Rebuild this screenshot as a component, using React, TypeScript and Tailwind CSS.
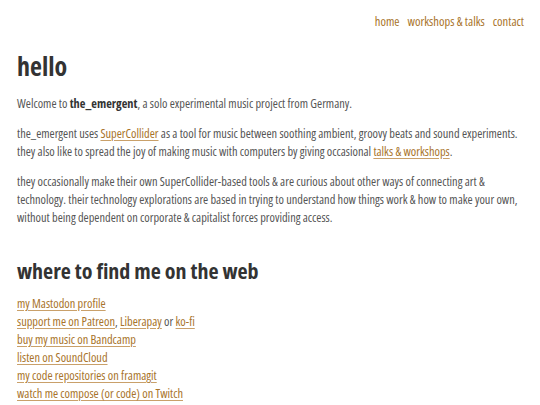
const link = "text-[#a8732a] underline decoration-[#c9a06a] underline-offset-2";

export default function App() {
  return (
    <div className="min-h-screen bg-white font-['Open_Sans',sans-serif] [font-stretch:condensed] text-[12.35px] leading-[18px] text-[#555]">
      <nav className="flex justify-end gap-2 px-4 pt-[13px] text-[12.5px]">
        <a className="text-[#a8732a]">home</a>
        <a className="text-[#a8732a]">workshops &amp; talks</a>
        <a className="text-[#a8732a]">contact</a>
      </nav>
      <main className="pl-[17px] pr-[8px]">
        <h1 className="mt-[19px] text-[26px] font-bold leading-[32px] text-[#333]">hello</h1>
        <p className="mt-[13px]">
          Welcome to <b className="text-[#333]">the_emergent</b>, a solo experimental music project from Germany.
        </p>
        <p className="mt-[12px]">
          the_emergent uses <a className={link}>SuperCollider</a> as a tool for music between soothing ambient, groovy beats and sound experiments.
          <br />
          they also like to spread the joy of making music with computers by giving occasional <a className={link}>talks &amp; workshops</a>.
        </p>
        <p className="mt-[12px] pr-[8px]">
          they occasionally make their own SuperCollider-based tools &amp; are curious about other ways of connecting art &amp; technology. their technology explorations are based in trying to understand how things work &amp; how to make your own, without being dependent on corporate &amp; capitalist forces providing access.
        </p>
        <h2 className="mt-[29px] text-[22px] font-bold leading-[28px] text-[#333]">where to find me on the web</h2>
        <ul className="mt-[11px]">
          <li><a className={link}>my Mastodon profile</a></li>
          <li>
            <a className={link}>support me on Patreon</a>, <a className={link}>Liberapay</a> or <a className={link}>ko-fi</a>
          </li>
          <li><a className={link}>buy my music on Bandcamp</a></li>
          <li><a className={link}>listen on SoundCloud</a></li>
          <li><a className={link}>my code repositories on framagit</a></li>
          <li><a className={link}>watch me compose (or code) on Twitch</a></li>
        </ul>
      </main>
    </div>
  );
}
